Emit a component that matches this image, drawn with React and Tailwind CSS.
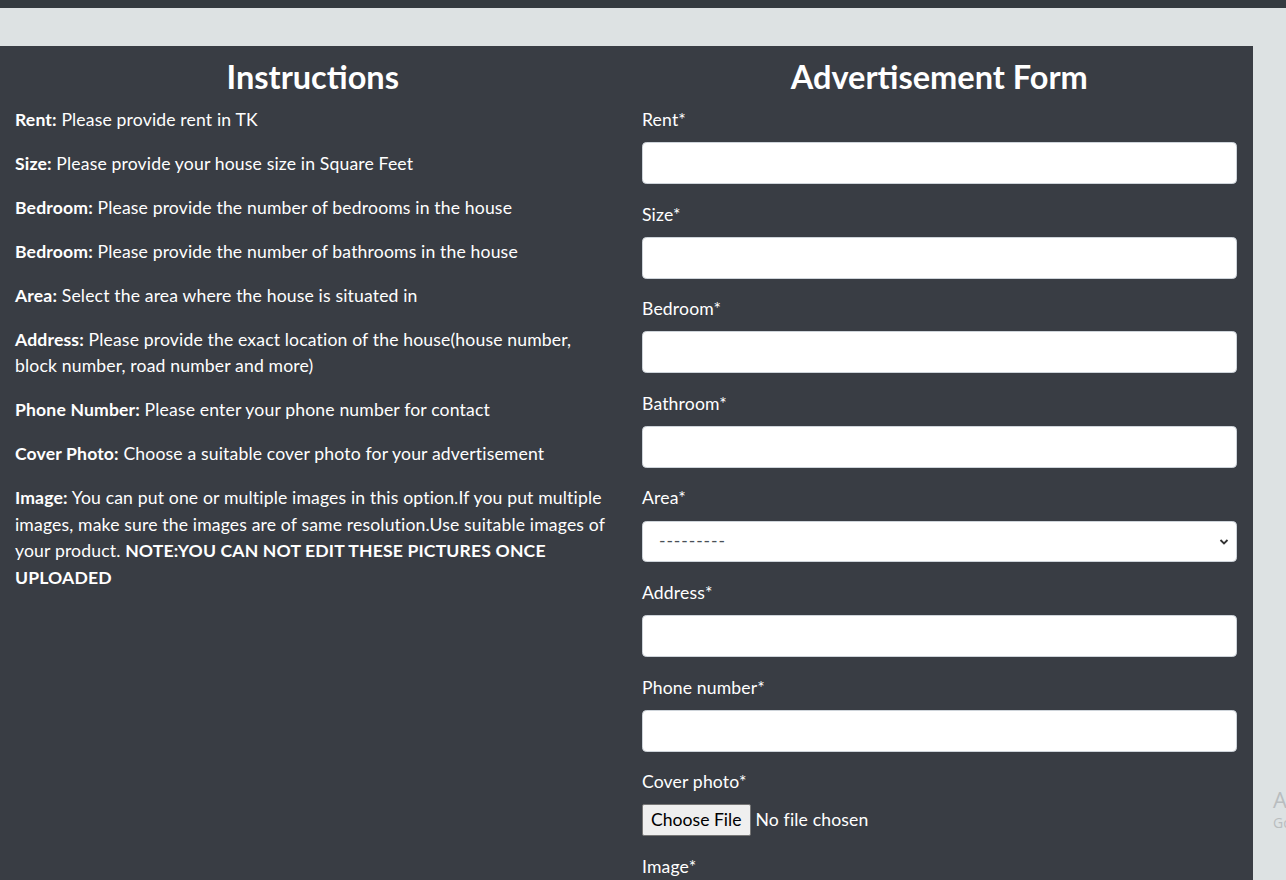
import React from "react";

const instructions = [
  ["Rent:", " Please provide rent in TK"],
  ["Size:", " Please provide your house size in Square Feet"],
  ["Bedroom:", " Please provide the number of bedrooms in the house"],
  ["Bedroom:", " Please provide the number of bathrooms in the house"],
  ["Area:", " Select the area where the house is situated in"],
  ["Address:", " Please provide the exact location of the house(house number, block number, road number and more)"],
  ["Phone Number:", " Please enter your phone number for contact"],
  ["Cover Photo:", " Choose a suitable cover photo for your advertisement"],
];

function Field({ label, children }) {
  return (
    <div className="mb-[17.6px]">
      <div className="mb-[8.8px] leading-[26.4px]">{label}</div>
      {children}
    </div>
  );
}

function TextInput() {
  return (
    <input
      type="text"
      className="block w-full h-[41.8px] bg-white border border-[#ced4da] rounded-[4.4px] px-[13px] text-[#495057] outline-none"
    />
  );
}

export default function App() {
  return (
    <div
      className="min-h-[880px] bg-[#dde2e3] text-white relative"
      style={{ fontFamily: "Lato, 'Open Sans', sans-serif" }}
    >
      <div className="h-[8px] bg-[#343a40]" />
      <div className="pt-[38px] w-[1253px]">
        <div className="bg-[#393d44] pt-[10px] pb-[40px] flex text-[17.6px] leading-[26.4px] tracking-[0.15px]">
          <div className="w-1/2 pl-[15px] pr-[16px]">
            <h2 className="text-center font-bold text-[32.5px] leading-[42.2px] mb-[8.8px] tracking-normal">Instructions</h2>
            {instructions.map(([b, t], i) => (
              <p key={i} className="mb-[17.6px]">
                <strong className="font-bold">{b}</strong>
                {t}
              </p>
            ))}
            <p className="mb-[17.6px]">
              <strong className="font-bold">Image:</strong> You can put one or multiple images in this option.If you put multiple images, make sure the images are of same resolution.Use suitable images of your product.{" "}
              <strong className="font-bold">NOTE:YOU CAN NOT EDIT THESE PICTURES ONCE UPLOADED</strong>
            </p>
          </div>
          <div className="w-1/2 pl-[15.5px] pr-[16.5px]">
            <h2 className="text-center font-bold text-[32.5px] leading-[42.2px] mb-[8.8px] tracking-normal">Advertisement Form</h2>
            <Field label="Rent*"><TextInput /></Field>
            <Field label="Size*"><TextInput /></Field>
            <Field label="Bedroom*"><TextInput /></Field>
            <Field label="Bathroom*"><TextInput /></Field>
            <Field label="Area*">
              <div className="relative">
                <select className="block w-full h-[41.8px] appearance-none bg-white border border-[#ced4da] rounded-[4.4px] pl-[16px] text-[17.6px] tracking-[0.9px] text-[#495057] outline-none">
                  <option>---------</option>
                </select>
                <svg className="absolute right-[8px] top-[17px] pointer-events-none" width="10" height="8" viewBox="0 0 10 8">
                  <path d="M1.5 2 L5 5.5 L8.5 2" fill="none" stroke="#333" strokeWidth="1.8" />
                </svg>
              </div>
            </Field>
            <Field label="Address*"><TextInput /></Field>
            <Field label="Phone number*"><TextInput /></Field>
            <Field label="Cover photo*">
              <div className="flex items-center h-[32px]">
                <span className="h-[32px] flex items-center px-[8px] bg-[#efefef] border border-[#767676] rounded-[2px] text-black tracking-normal">
                  Choose File
                </span>
                <span className="ml-[5px]">No file chosen</span>
              </div>
            </Field>
            <Field label="Image*">
              <div className="flex items-center h-[32px]">
                <span className="h-[32px] flex items-center px-[8px] bg-[#efefef] border border-[#767676] rounded-[2px] text-black tracking-normal">
                  Choose Files
                </span>
                <span className="ml-[5px]">No file chosen</span>
              </div>
            </Field>
          </div>
        </div>
      </div>
      <div className="absolute left-[1273px] top-[785px] text-[#b9bdbf] whitespace-nowrap" style={{ fontFamily: "'Open Sans', sans-serif" }}>
        <div className="text-[22px] leading-[29px]">Activate Windows</div>
        <div className="text-[14px] leading-[18px]">Go to Settings to activate Windows.</div>
      </div>
    </div>
  );
}
